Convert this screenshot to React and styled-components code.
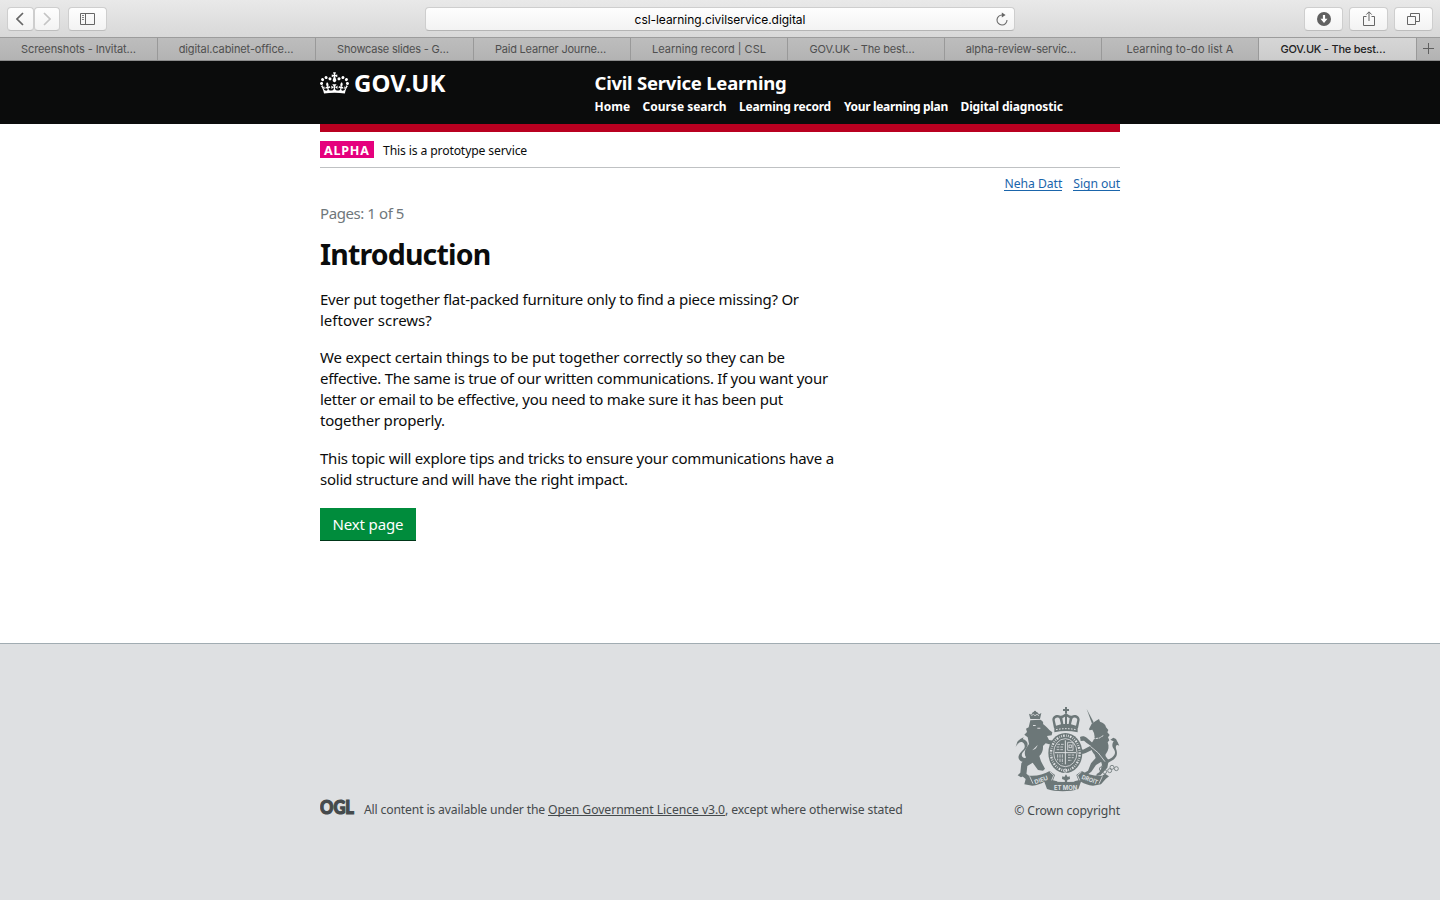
import React from 'react';
import styled, { createGlobalStyle } from 'styled-components';

const Global = createGlobalStyle`
  * { box-sizing: border-box; }
  body { margin: 0; background: #fff; color: #0b0c0c; font-family: "Noto Sans", sans-serif; }
  a { color: inherit; text-decoration: none; }
  svg { display: block; }
`;

/* Text run with its own letter spacing */
const Run = styled.span`
  letter-spacing: ${p => p.$track || 0}px;
  white-space: nowrap;
`;

const Window = styled.div`
  display: flex;
  flex-direction: column;
  width: 1440px;
  height: 900px;
  overflow: hidden;
`;

/* ---------- browser chrome ---------- */
const Toolbar = styled.div`
  display: flex;
  align-items: center;
  justify-content: space-between;
  height: 37px;
  padding: 1px 7px 0;
  background: linear-gradient(#e9e9e9, #d8d8d8);
  flex: none;
`;
const ToolGroup = styled.div`
  display: flex;
  gap: ${p => p.$gap || 0}px;
  width: 160px;
  justify-content: ${p => (p.$end ? 'flex-end' : 'flex-start')};
`;
const ToolButton = styled.button`
  display: flex;
  align-items: center;
  justify-content: center;
  width: ${p => p.$w || 39}px;
  height: 24px;
  padding: 0 ${p => p.$inset || 0}px 0 0;
  margin: 0 ${p => p.$after || 0}px 0 0;
  border: 1px solid #cecece;
  border-bottom-color: #bdbdbd;
  border-radius: 4px;
  background: linear-gradient(#fefefe, #f3f3f3);
`;
const Address = styled.div`
  display: grid;
  grid-template-columns: 24px 1fr 24px;
  align-items: center;
  justify-items: center;
  width: 590px;
  height: 24px;
  border: 1px solid #cecece;
  border-bottom-color: #b4b4b4;
  border-radius: 4px;
  background: linear-gradient(#fefefe, #f3f3f3);
  font: 12px/24px Inter, sans-serif;
  color: #000;
`;
const TabBar = styled.div`
  display: flex;
  height: 24px;
  flex: none;
  border-top: 1px solid #9c9c9c;
  border-bottom: 1px solid #8c8c8c;
  background: linear-gradient(#bdbdbd, #b3b3b3);
`;
const Tab = styled.div`
  width: ${p => p.$w}px;
  padding-right: ${p => p.$inset || 0}px;
  flex: none;
  border-right: 1px solid #999;
  text-align: center;
  font: ${p => (p.$active ? 500 : 400)} 11px/22px Inter, sans-serif;
  color: ${p => (p.$active ? '#222' : '#4f4f4f')};
  background: ${p => (p.$active ? 'linear-gradient(#d6d6d6, #cccccc)' : 'none')};
`;
const NewTab = styled.div`
  flex: 1;
  display: flex;
  align-items: center;
  justify-content: center;
`;

/* ---------- page header ---------- */
const Header = styled.header`
  height: 63px;
  flex: none;
  background: #0b0c0c;
  color: #fff;
  display: flex;
  justify-content: center;
`;
const HeaderInner = styled.div`
  display: flex;
  width: 800px;
`;
const Brand = styled.a`
  display: flex;
  width: 274.5px;
  gap: 5px;
  padding-top: 11px;
  font-weight: 700;
  font-size: 24px;
  line-height: 21px;
`;
const Service = styled.div`
  display: flex;
  flex-direction: column;
  padding-top: 9px;
`;
const ServiceName = styled.a`
  font-weight: 700;
  font-size: 18.5px;
  line-height: 25px;
`;
const Nav = styled.nav`
  display: flex;
  padding-top: 2px;
  font-weight: 700;
  font-size: 12px;
  line-height: 20px;
`;
const NavItem = styled.a`
  width: ${p => p.$w}px;
`;

/* ---------- page body ---------- */
const Main = styled.main`
  width: 800px;
  height: 519px;
  flex: none;
  margin: 0 auto;
  border-top: 8px solid #b90020;
`;
const PhaseBanner = styled.div`
  display: flex;
  align-items: center;
  gap: 9px;
  height: 36px;
  border-bottom: 1px solid #bfc1c3;
  font-size: 12.2px;
  line-height: 16px;
`;
const PhaseText = styled.span`
  padding-top: 2px;
`;
const PhaseTag = styled.strong`
  width: 54px;
  height: 17px;
  padding-left: 4px;
  background: #e5007d;
  color: #fff;
  font-size: 12.5px;
  line-height: 19px;
`;
const UserLinks = styled.div`
  display: flex;
  justify-content: flex-end;
  gap: 11px;
  padding-top: 8px;
  font-size: 12.2px;
  line-height: 16px;
  color: #1a65ab;
`;
const UserLink = styled.a`
  height: 15px;
  border-bottom: 1px solid #1a65ab;
`;
const PageCount = styled.p`
  margin: 12px 0 0;
  font-size: 15px;
  line-height: 20px;
  color: #6f777b;
`;
const Title = styled.h1`
  margin: 14px 0 0;
  font-size: 28.5px;
  line-height: 35px;
`;
const Copy = styled.p`
  display: flex;
  flex-direction: column;
  margin: ${p => p.$top}px 0 0;
  font-size: 15px;
  line-height: 21px;
`;
const NextButton = styled.a`
  display: block;
  width: 96px;
  height: 33px;
  margin-top: 18px;
  padding-left: 12.5px;
  background: #008c3c;
  border-bottom: 1px solid #003618;
  color: #fff;
  font-size: 15px;
  line-height: 32px;
`;

/* ---------- footer ---------- */
const Footer = styled.footer`
  flex: 1;
  display: flex;
  justify-content: center;
  border-top: 1px solid #a1acb2;
  background: #dee0e2;
  color: #454a4c;
  font-size: 12.2px;
  line-height: 16px;
`;
const FooterInner = styled.div`
  display: flex;
  justify-content: space-between;
  align-items: flex-end;
  width: 800px;
  height: 175px;
`;
const Licence = styled.div`
  display: flex;
  gap: 8px;
  align-items: flex-end;
`;
const LicenceText = styled.div`
  height: 17px;
`;
const LicenceLink = styled.a`
  border-bottom: 1px solid #454a4c;
  display: inline-block;
  height: 14px;
  line-height: 15px;
`;
const Copyright = styled.div`
  display: flex;
  flex-direction: column;
  align-items: flex-end;
  gap: 9px;
`;

const Chevron = ({ flip, color }) => (
  <svg width="8" height="14" viewBox="0 0 8 14" fill="none" stroke={color} strokeWidth="1.7">
    <path d={flip ? 'M1 1l6 6-6 6' : 'M7 1L1 7l6 6'} />
  </svg>
);
const Sidebar = () => (
  <svg width="15" height="12" viewBox="0 0 15 12" fill="none" stroke="#666">
    <path d="M.5.5h14v11H.5zM5.500.5v11" />
    <path d="M2 2.500h2M2 4.500h2M2 6.500h2" strokeWidth=".8" />
  </svg>
);
const Reload = () => (
  <svg width="12" height="16" viewBox="0 0 12 16">
    <path d="M6.200 3A5 5 0 1 0 11 8" fill="none" stroke="#6a6a6a" strokeWidth="1.100" />
    <path d="M5.800.5v5L9.600 3z" fill="#666" />
  </svg>
);
const Download = () => (
  <svg width="14" height="14" viewBox="0 0 14 14">
    <circle cx="7" cy="7" r="7" fill="#606060" />
    <path d="M5.900 3h2.200v3.800h2.400L7 10.900 3.500 6.800h2.400z" fill="#fff" />
  </svg>
);
const Share = () => (
  <svg width="12" height="16" viewBox="0 0 12 16" fill="none" stroke="#666">
    <path d="M3.500 5.500h-3v9h11v-9h-3M6 10V1M3.300 3.600L6 .8l2.700 2.800" />
  </svg>
);
const Windows = () => (
  <svg width="13" height="12" viewBox="0 0 13 12" fill="none" stroke="#666">
    <path d="M.5 3.500h8v8h-8zM3.500 3.500v-3h9v8h-4" />
  </svg>
);
const Plus = () => (
  <svg width="11" height="13" viewBox="0 0 11 13" stroke="#606060">
    <path d="M5.500 0v11M0 5.500h11" />
  </svg>
);

const Crown = () => (
  <svg width="29" height="22" viewBox="0 0 132 97" fill="#fff">
    <path d="M25 30.2c3.5 1.5 7.7-.2 9.1-3.7 1.5-3.6-.2-7.8-3.9-9.2-3.6-1.4-7.6.3-9.1 3.9-1.4 3.5.3 7.5 3.9 9zM9 39.5c3.6 1.5 7.8-.2 9.2-3.7 1.5-3.6-.2-7.8-3.9-9.1-3.6-1.5-7.6.2-9.1 3.8-1.4 3.5.3 7.5 3.8 9zM4.400 57.2c3.5 1.5 7.7-.2 9.1-3.8 1.5-3.6-.2-7.7-3.9-9.1-3.5-1.5-7.6.3-9.1 3.8-1.4 3.5.3 7.6 3.9 9.1zm38.3-21.4c3.5 1.5 7.7-.2 9.1-3.8 1.5-3.6-.2-7.7-3.9-9.1-3.6-1.5-7.6.3-9.1 3.8-1.3 3.6.4 7.7 3.9 9.1zm64.4-5.6c-3.6 1.5-7.8-.2-9.1-3.7-1.5-3.6.2-7.8 3.8-9.2 3.6-1.4 7.7.3 9.2 3.9 1.3 3.5-.4 7.5-3.9 9zm15.9 9.3c-3.6 1.5-7.7-.2-9.1-3.7-1.5-3.6.2-7.8 3.7-9.1 3.6-1.5 7.7.2 9.2 3.8 1.5 3.5-.3 7.5-3.8 9zm4.7 17.7c-3.6 1.5-7.8-.2-9.2-3.8-1.5-3.6.2-7.7 3.9-9.1 3.6-1.5 7.7.3 9.2 3.8 1.3 3.5-.4 7.6-3.9 9.1zM89.3 35.8c-3.6 1.5-7.8-.2-9.2-3.8-1.4-3.6.2-7.7 3.9-9.1 3.6-1.5 7.7.3 9.2 3.8 1.4 3.6-.3 7.7-3.9 9.1zM69.7 17.7l8.9 4.7V9.3l-8.9 2.8c-.2-.3-.5-.6-.9-.9L72.4 0H59.6l3.5 11.2c-.3.3-.6.5-.9.9l-8.8-2.8v13.1l8.8-4.7c.3.3.6.7.9.9l-5 15.4v.1c-.2.8-.4 1.6-.4 2.4 0 4.1 3.1 7.5 7 8.1h.2c.3 0 .7.1 1 .1.4 0 .7 0 1-.1h.2c4-.6 7.1-4.1 7.1-8.1 0-.8-.1-1.7-.4-2.4V34l-5.1-15.4c.4-.2.7-.6 1-.9zM66 92.8c16.9 0 32.8 1.1 47.1 3.2 4-16.9 8.9-26.7 14-33.5l-9.6-3.4c1 4.9 1.1 7.2 0 10.2-1.5-1.4-3-4.3-4.2-8.7L108.6 76c2.8-2 5-3.2 7.5-3.3-4.4 9.4-10 11.9-13.6 11.2-4.3-.8-6.3-4.6-5.6-7.9 1-4.7 5.7-5.9 8-.5 4.3-8.7-3-11.4-7.6-8.8 7.1-7.2 7.9-13.5 2.1-21.1-8 6.1-8.1 12.3-4.5 20.8-4.7-5.4-12.1-2.5-9.5 6.2 3.4-5.2 7.9-2 7.2 3.1-.6 4.3-6.4 7.8-13.5 7.2-10.3-.9-10.9-8-11.2-13.8 2.5-.5 7.1 1.8 11 7.3L80.2 60c-4.1 4.4-8 5.3-12.3 5.4 1.4-4.4 8-11.6 8-11.6H55.5s6.4 7.2 7.9 11.6c-4.2-.1-8-1-12.3-5.4l1.4 16.4c3.9-5.5 8.5-7.7 10.9-7.3-.3 5.8-.9 12.8-11.1 13.8-7.2.6-12.9-2.9-13.5-7.2-.7-5 3.8-8.3 7.1-3.1 2.7-8.7-4.6-11.6-9.4-6.2 3.7-8.5 3.6-14.7-4.6-20.8-5.8 7.6-5 13.9 2.2 21.1-4.7-2.6-11.9.1-7.7 8.8 2.3-5.5 7.1-4.2 8.1.5.7 3.3-1.3 7.1-5.7 7.9-3.5.7-9-1.8-13.5-11.2 2.5.1 4.7 1.3 7.5 3.3l-4.7-15.4c-1.2 4.4-2.7 7.2-4.3 8.7-1.1-3-.9-5.3 0-10.2l-9.5 3.4c5 6.9 9.9 16.7 14 33.5 14.8-2.1 30.8-3.2 47.7-3.2z" />
  </svg>
);

const OglLogo = () => (
  <svg width="36" height="24" viewBox="0 0 36 24">
    <text x="0" y="18.500" textLength="34" lengthAdjust="spacingAndGlyphs" fontFamily="Lato, sans-serif" fontWeight="900" fontSize="18" fill="#454a4c" stroke="#454a4c" strokeWidth="1.200">OGL</text>
  </svg>
);

const RoyalArms = () => (
  <svg width="106" height="88" viewBox="29 17 318 264" fill="#6c7778" stroke="none">
    {/* lion */}
    <path d="M78 56l-4-16 7 3 4-7 7-3 7 3 5 6 7-4-4 18z" />
    <circle cx="92" cy="34" r="3" />
    <path d="M81 46l6-4 5 4 6-4 6 4" fill="none" stroke="#dee0e2" strokeWidth="2.500" />
    <path d="M78 60l30-2c7 3 10 8 8 13 8 6 14 12 19 18l9 7-2 9-14 2 6 12 14 2 2 9-10 3-16-4-8 8c1 12-3 22-11 30l5 16 12 22-6 6-15-2-16-22-16 10-3 26-16 8-10-6 8-8 3-28 14-18c-5-8-5-18 1-28l8-12-4-20-10-8 8-8-3-10 8-4z" />
    <path d="M64 186c-20 0-27-14-17-27 9-11 20-16 11-30-6-8-15-4-19 5 0-16 12-22 22-16 15 9 9 24-2 34-11 11-8 20 6 22z" />
    <path d="M34 140l5-16 10-9 9-4-4 9-12 6z" />
    <path d="M86 74h8v3h-8zM99 82h9v3h-9zM84 150c8-2 14-8 16-16M70 170l14-14" fill="#dee0e2" />
    {/* unicorn */}
    <path d="M247 26l21 40-5 4z" />
    <path d="M254 86l8-16 12-8 10-6 3 8c11 3 17 9 18 17l7 8-3 7 7 8-5 7 4 9-5 6c5 12 3 24-5 34l-24 8c-11-4-18-12-20-22l-2-14c6-8 10-14 12-22l-2-12-5-10-8 2z" />
    <path d="M227 110c6-4 15-3 21 3l16 14-5 9-13-9-7-6-10 1z" />
    <path d="M263 134l-17 9-10 5-12-6-3 6 14 13 9-3 20-10z" />
    <path d="M301 148c6 14 2 26-6 34l-20 12-14 20-16 12-9-3 7-7 8-5 9-22 14-16-5-16z" />
    <path d="M298 160l15 20-4 22-20 22-13 3 1-6 8-5 9-18-3-12-12-10z" />
    <path d="M251 103l8 8 12 4 14-2 13-8" fill="none" stroke="#dee0e2" strokeWidth="3" strokeDasharray="7 2" />
    <path d="M306 180c14-6 23-10 26-22 1-11-9-15-8-25 1-9 8-15 14-9l7 13c-8-7-12 0-10 8 6 15 2 25-8 33l-17 10z" />
    <path d="M318 118l9-6 8 4 9 18-14-10z" />
    <g fill="none" stroke="#6c7778" strokeWidth="2.500">
      <circle cx="291" cy="206" r="6" /><circle cx="301" cy="214" r="6" /><circle cx="316" cy="211" r="6" />
      <circle cx="323" cy="201" r="6" /><circle cx="336" cy="205" r="6" /><circle cx="297" cy="199" r="5" />
      <path d="M258 138l24 20 20 26" stroke="#dee0e2" />
    </g>
    {/* crown */}
    <path d="M182 20h6v6h6v6h-6v8h-6v-8h-6v-6h6z" />
    <path d="M149 84l-5-26c0-12 14-18 24-12 8 0 12-6 17-6s9 6 17 6c10-6 24 0 24 12l-5 26c-24-5-48-5-72 0z" />
    <path d="M155 76l-4-18c2-8 11-9 15-3l4 17zM215 76l4-18c-2-8-11-9-15-3l-4 17zM177 71l-3-17 8-5v22zM193 71l3-17-8-5v22z" fill="#dee0e2" />
    <path d="M150 82c23-5 47-5 70 0v14c-23-5-47-5-70 0z" />
    <path d="M155 88c20-4 40-4 60 0" fill="none" stroke="#dee0e2" strokeWidth="3" strokeDasharray="5 4" />
    {/* garter and shield */}
    <ellipse cx="183" cy="158" rx="51" ry="60" />
    <ellipse cx="183" cy="158" rx="43" ry="52" fill="none" stroke="#dee0e2" strokeWidth="7" strokeDasharray="2.500 3.500 5 4 2 4" />
    <ellipse cx="183" cy="157" rx="35" ry="42" fill="none" stroke="#dee0e2" strokeWidth="2.500" />
    <path d="M183 120v72M151 157h64" stroke="#dee0e2" strokeWidth="3" />
    <g fill="none" stroke="#dee0e2" strokeWidth="2.500">
      <path d="M159 132h20M157 140h22M157 148h22" strokeDasharray="8 3" />
      <path d="M190 126h16v24h-16zM194 134h8v8h-8z" />
      <path d="M160 162v18M167 162v24M174 162v28" strokeDasharray="10 3" />
      <path d="M191 164h18M191 172h17M191 180h12" strokeDasharray="8 3" />
    </g>
    <circle cx="183" cy="211" r="5" fill="none" stroke="#dee0e2" strokeWidth="2.500" />
    {/* motto scroll */}
    <path d="M64 236l-10-8 12-8 8 6c24 2 44-4 62-14l16 12-6 16c22 6 54 6 76 0l-6-16 16-12c18 10 38 16 62 14l8-6 12 8-10 8-14 16-24 4c-14-2-26-6-36-12l-8 22c-24 9-70 9-94 0l-8-22c-10 6-22 10-36 12l-24-4z" />
    <path d="M136 214l12 11-6 15M232 214l-12 11 6 15M76 228l10 22M294 228l-10 22" fill="none" stroke="#dee0e2" strokeWidth="2.500" />
    <path d="M154 220h61l-5 24h-51z" fill="#dee0e2" />
    <path d="M185 222l5 8 6-2 1 8-8 3-1 7h-6l-1-7-8-3 1-8 6 2z" />
    <g fill="#dee0e2" fontFamily="Inter, sans-serif" fontWeight="700" fontSize="18">
      <text x="149" y="268" textLength="70" lengthAdjust="spacingAndGlyphs">ET MON</text>
      <text x="93" y="252" textLength="42" transform="rotate(-20 93 252)">DIEU</text>
      <text x="231" y="235" textLength="50" lengthAdjust="spacingAndGlyphs" transform="rotate(20 231 235)">DROIT</text>
    </g>
  </svg>
);

const TABS = [
  ['Screenshots - Invitat…', 158, -0.1],
  ['digital.cabinet-office…', 158, -0.1, 1],
  ['Showcase slides - G…', 158, -0.19, 3],
  ['Paid Learner Journe…', 157, -0.2, 3],
  ['Learning record | CSL', 157, 0],
  ['GOV.UK - The best…', 157, -0.16, 8],
  ['alpha-review-servic…', 157, -0.17, 4],
  ['Learning to-do list A', 157, 0.06],
];
const NAV = [
  ['Home', 48, 0],
  ['Course search', 96.5, 0],
  ['Learning record', 105, -0.2],
  ['Your learning plan', 116.5, -0.34],
  ['Digital diagnostic', 110, -0.15],
];
const COPY = [
  [17, [
    ['Ever put together flat-packed furniture only to find a piece missing? Or', -0.246],
    ['leftover screws?', 0],
  ]],
  [16, [
    ['We expect certain things to be put together correctly so they can be', -0.168],
    ['effective. The same is true of our written communications. If you want your', -0.281],
    ['letter or email to be effective, you need to make sure it has been put', -0.266],
    ['together properly.', -0.2],
  ]],
  [17, [
    ['This topic will explore tips and tricks to ensure your communications have a', -0.23],
    ['solid structure and will have the right impact.', -0.22],
  ]],
];

export default function App() {
  return (
    <Window>
      <Global />
      <Toolbar>
        <ToolGroup>
          <ToolButton $w={27} $inset={2}><Chevron color="#666" /></ToolButton>
          <ToolButton $w={26} $after={8}><Chevron flip color="#c4c4c4" /></ToolButton>
          <ToolButton><Sidebar /></ToolButton>
        </ToolGroup>
        <Address>
          <span />
          <Run $track={-0.05}>csl-learning.civilservice.digital</Run>
          <Reload />
        </Address>
        <ToolGroup $end $gap={6}>
          <ToolButton><Download /></ToolButton>
          <ToolButton><Share /></ToolButton>
          <ToolButton><Windows /></ToolButton>
        </ToolGroup>
      </Toolbar>
      <TabBar>
        {TABS.map(([label, w, track, inset], i) => (
          <Tab key={i} $w={w} $inset={inset}><Run $track={track}>{label}</Run></Tab>
        ))}
        <Tab $w={158} $inset={9} $active><Run $track={-0.23}>GOV.UK - The best…</Run></Tab>
        <NewTab><Plus /></NewTab>
      </TabBar>

      <Header>
        <HeaderInner>
          <Brand><Crown /><Run $track={0.1}>GOV.UK</Run></Brand>
          <Service>
            <ServiceName><Run $track={-0.22}>Civil Service Learning</Run></ServiceName>
            <Nav>
              {NAV.map(([label, w, track]) => (
                <NavItem key={label} $w={w}><Run $track={track}>{label}</Run></NavItem>
              ))}
            </Nav>
          </Service>
        </HeaderInner>
      </Header>

      <Main>
        <PhaseBanner>
          <PhaseTag><Run $track={0.8}>ALPHA</Run></PhaseTag>
          <PhaseText><Run $track={-0.145}>This is a prototype service</Run></PhaseText>
        </PhaseBanner>
        <UserLinks>
          <UserLink><Run $track={-0.04}>Neha Datt</Run></UserLink>
          <UserLink><Run $track={-0.08}>Sign out</Run></UserLink>
        </UserLinks>
        <PageCount><Run $track={-0.42}>Pages: 1 of 5</Run></PageCount>
        <Title><Run $track={-0.84}>Introduction</Run></Title>
        {COPY.map(([top, lines]) => (
          <Copy key={lines[0][0]} $top={top}>
            {lines.map(([text, track]) => <Run key={text} $track={track}>{text}</Run>)}
          </Copy>
        ))}
        <NextButton><Run $track={-0.14}>Next page</Run></NextButton>
      </Main>

      <Footer>
        <FooterInner>
          <Licence>
            <OglLogo />
            <LicenceText>
              <Run $track={-0.165}>All content is available under the </Run>
              <LicenceLink><Run $track={-0.06}>Open Government Licence v3.0</Run></LicenceLink>
              <Run $track={-0.13}>, except where otherwise stated</Run>
            </LicenceText>
          </Licence>
          <Copyright>
            <RoyalArms />
            <Run $track={-0.1}>© Crown copyright</Run>
          </Copyright>
        </FooterInner>
      </Footer>
    </Window>
  );
}
